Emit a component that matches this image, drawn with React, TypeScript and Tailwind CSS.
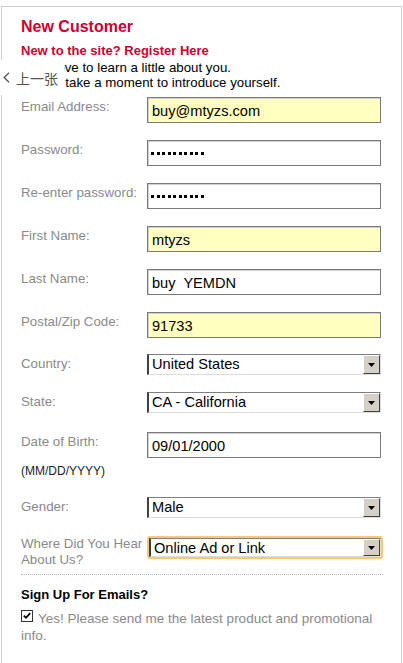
import React from "react";

type FieldProps = {
    label: React.ReactNode;
    className?: string;
    labelClassName?: string;
    children: React.ReactNode;
};

function Row({ label, className = "", labelClassName = "pt-[2px]", children }: FieldProps) {
    return (
        <div className={`flex items-start ${className}`}>
            <div className={`w-[126px] shrink-0 text-[13.3px] leading-[16px] text-[#8a8a8a] ${labelClassName}`}>
                {label}
            </div>
            {children}
        </div>
    );
}

function TextBox({ value, highlight }: { value: string; highlight?: boolean }) {
    return (
        <input
            readOnly
            value={value}
            className={`h-[26px] w-[234px] border border-[#7a7a7a] pl-[4px] pt-[1px] text-[14.6px] text-black outline-none shadow-[inset_1px_1px_0_#d0d0d0] ${
                highlight ? "bg-[#ffffc2]" : "bg-white"
            }`}
        />
    );
}

function PasswordBox() {
    return (
        <div className="flex h-[26px] w-[234px] items-center gap-[2.5px] border border-[#7a7a7a] bg-white pl-[3px] shadow-[inset_1px_1px_0_#d0d0d0]">
            {Array.from({ length: 10 }).map((_, i) => (
                <span key={i} className="h-[3px] w-[3px] bg-black" />
            ))}
        </div>
    );
}

function Select({ value, focused }: { value: string; focused?: boolean }) {
    const box = (
        <div
            className={`flex w-full border-t border-l-2 border-r border-b border-t-[#808080] border-l-[#404040] border-r-[#dcdcdc] border-b-[#dcdcdc] bg-white ${
                focused ? "h-[19px]" : "h-[21px]"
            }`}
        >
            <div className="flex-1 pl-[3px] text-[14.6px] leading-[18px] text-black">{value}</div>
            <div className="flex w-[17px] items-center justify-center border border-t-white border-l-white border-r-[#404040] border-b-[#404040] bg-[#d4d0c8]">
                <svg width="7" height="4" viewBox="0 0 7 4">
                    <path d="M0 0h7L3.5 4z" fill="#000" />
                </svg>
            </div>
        </div>
    );

    if (focused) {
        return <div className="w-[236px] rounded-[3px] border-2 border-[#f6c979]">{box}</div>;
    }
    return <div className="w-[234px]">{box}</div>;
}

export default function App() {
    return (
        <div className="relative h-[663px] overflow-hidden bg-white font-['Liberation_Sans',Arial,sans-serif]">
            <div className="ml-[1px] mt-[6px] w-[401px] border border-b-0 border-[#cdcdcd] pl-[19px] pr-[18px] pt-[11px]">
                {/* Header */}
                <h1 className="text-[16px] font-bold leading-[18px] text-[#cc0033]">New Customer</h1>
                <h2 className="mt-[7px] text-[13px] font-bold leading-[15px] text-[#cc0033]">
                    New to the site? Register Here
                </h2>
                <p className="mt-[2px] text-[13.3px] leading-[15px] text-black">
                    We'd love to learn a little about you.
                    <br />
                    Please take a moment to introduce yourself.
                </p>

                {/* Form */}
                <Row label="Email Address:" className="mt-[7px]">
                    <TextBox value="buy@mtyzs.com" highlight />
                </Row>
                <Row label="Password:" className="mt-[17px]">
                    <PasswordBox />
                </Row>
                <Row label="Re-enter password:" className="mt-[17px]">
                    <PasswordBox />
                </Row>
                <Row label="First Name:" className="mt-[17px]">
                    <TextBox value="mtyzs" highlight />
                </Row>
                <Row label="Last Name:" className="mt-[17px]">
                    <TextBox value="buy  YEMDN" />
                </Row>
                <Row label="Postal/Zip Code:" className="mt-[17px]">
                    <TextBox value="91733" highlight />
                </Row>
                <Row label="Country:" className="mt-[16px]">
                    <Select value="United States" />
                </Row>
                <Row label="State:" className="mt-[17px]">
                    <Select value="CA - California" />
                </Row>
                <Row label="Date of Birth:" className="mt-[19px]">
                    <TextBox value="09/01/2000" />
                </Row>
                <div className="mt-[6px] text-[12px] leading-[14px] text-[#222]">(MM/DD/YYYY)</div>
                <Row label="Gender:" className="mt-[19px]">
                    <Select value="Male" />
                </Row>
                <Row label="Where Did You Hear About Us?" className="mt-[18px]" labelClassName="pt-0">
                    <Select value="Online Ad or Link" focused />
                </Row>

                <div className="mt-[6px] border-t border-dotted border-[#b5b5b5]" />

                {/* Emails */}
                <h3 className="mt-[12px] text-[13px] font-bold leading-[15px] text-black">Sign Up For Emails?</h3>
                <p className="mt-[8px] pb-[20px] text-[13.5px] leading-[17px] text-[#8a8a8a]">
                    <span className="relative mr-[5px] inline-block h-[12px] w-[12px] border border-[#333] bg-white align-[1px]">
                        <svg className="absolute left-[1px] top-[1px]" width="8" height="8" viewBox="0 0 8 8">
                            <path d="M0.8 3.6 L3 5.8 L7.2 1.2" stroke="#000" strokeWidth="1.8" fill="none" />
                        </svg>
                    </span>
                    Yes! Please send me the latest product and promotional info.
                </p>
            </div>

            {/* Gallery prev overlay */}
            <div className="absolute left-0 top-[60px] flex h-[35px] w-[64px] items-center gap-[6px] bg-white pl-[3px] text-[14px] text-[#555] font-['Noto_Sans_CJK_SC',sans-serif]">
                <svg width="7" height="11" viewBox="0 0 7 11">
                    <path d="M6 0.8 L1.2 5.5 L6 10.2" stroke="#555" strokeWidth="1.3" fill="none" />
                </svg>
                <span className="leading-none">上一张</span>
            </div>
        </div>
    );
}
